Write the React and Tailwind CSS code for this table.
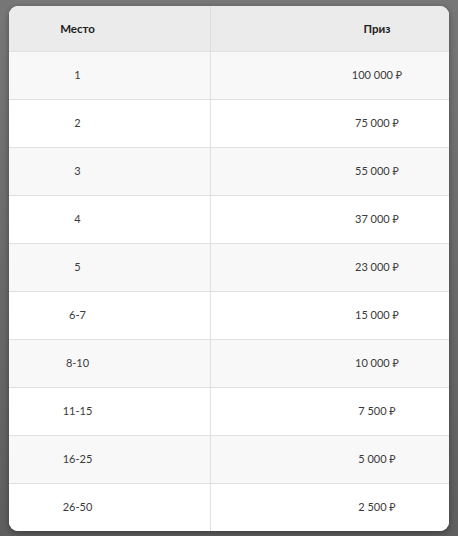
const rows = [
  ['1', '100 000 ₽'],
  ['2', '75 000 ₽'],
  ['3', '55 000 ₽'],
  ['4', '37 000 ₽'],
  ['5', '23 000 ₽'],
  ['6-7', '15 000 ₽'],
  ['8-10', '10 000 ₽'],
  ['11-15', '7 500 ₽'],
  ['16-25', '5 000 ₽'],
  ['26-50', '2 500 ₽'],
]

export default function App() {
  return (
    <div className="h-[536px] w-[458px] bg-gradient-to-b from-[#777777] to-[#5e5e5e] pl-[9px] pr-[9px] pt-[6px] font-['Lato','Noto_Sans',sans-serif] text-[11px] text-[#3a3a3a]">
      <div className="overflow-hidden rounded-[9px] bg-white shadow-[0_2px_6px_rgba(0,0,0,0.35)]">
        <div className="flex h-[45px] bg-[#ebebeb] text-[11.5px] font-bold text-[#222222]">
          <div className="flex w-[202px] items-center justify-center border-r border-[#dcdcdc] pr-[64px]">Место</div>
          <div className="flex flex-1 items-center justify-center pl-[94px]">Приз</div>
        </div>
        {rows.map(([place, prize], i) => (
          <div
            key={place}
            className={`flex h-[48px] border-t border-[#e0e0e0] ${i % 2 === 0 ? 'bg-[#f8f8f8]' : 'bg-white'} ${i === rows.length - 1 ? 'h-[46px]' : ''}`}
          >
            <div className="flex w-[202px] items-center justify-center border-r border-[#e0e0e0] pr-[64px]">{place}</div>
            <div className="flex flex-1 items-center justify-center pl-[94px]">{prize}</div>
          </div>
        ))}
      </div>
    </div>
  )
}
